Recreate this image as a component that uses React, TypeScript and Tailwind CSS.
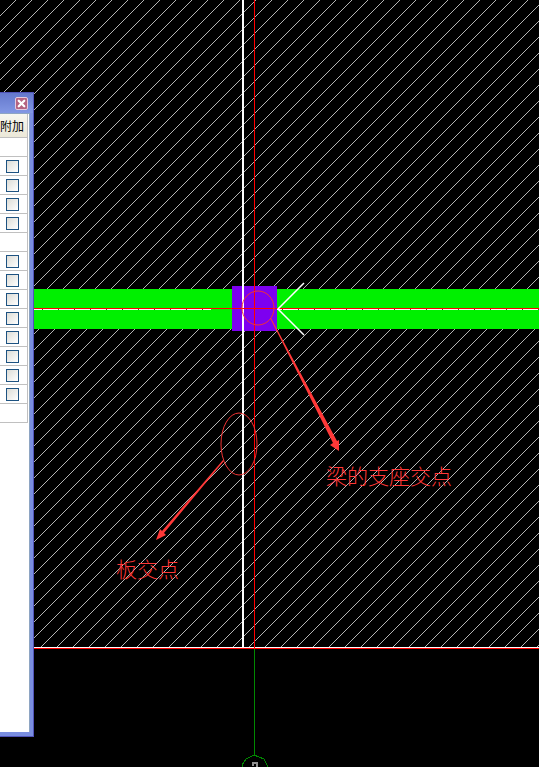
import { X } from "lucide-react";

// One entry per grid row, true where the row has a tick box
const rows = [
  false,
  true, true, true, true,
  false,
  true, true, true, true, true, true, true, true,
  false,
];

// Stepped diagonal of single pixels, repeated every 16px
const hatchPath = Array.from({ length: 16 }, (_, i) => `M${i} ${15 - i}h1v1h-1z`).join("");

function Drawing() {
  return (
    <svg className="absolute inset-0 h-full w-full" aria-hidden="true">
      <defs>
        <pattern id="hatch" width="16" height="16" patternUnits="userSpaceOnUse">
          <path d={hatchPath} fill="#b4b4b4" shapeRendering="crispEdges" />
        </pattern>
        <pattern id="dashes" width="16" height="16" patternUnits="userSpaceOnUse">
          <rect width="16" height="16" fill="#ffffff" />
          <rect x="10" width="1" height="16" fill="#604020" />
        </pattern>
      </defs>

      <g shapeRendering="crispEdges">
        <rect width="100%" height="647" fill="url(#hatch)" />

        {/* Beam and column */}
        <rect y="289" width="100%" height="40" fill="#00f000" />
        <rect y="309" width="100%" height="1" fill="url(#dashes)" />
        <rect x="211" y="309" width="21" height="1" fill="#00f000" />
        <rect x="232" y="286" width="45" height="45" fill="#7d00f0" />

        {/* Slab edges */}
        <rect x="242" width="2" height="647" fill="#ffffff" />
        <rect y="647" width="100%" height="1" fill="#ffffff" />

        {/* Axes */}
        <rect y="308" width="100%" height="1" fill="#ff0000" />
        <rect y="648" width="100%" height="1" fill="#ff0000" />
        <rect x="254" width="1" height="648" fill="#ff0000" />
        <rect x="254" y="649" width="1" height="107" fill="#008800" />
        <path
          d="M242 768V765L246 759L250 757L254 755L259 757L264 759L267 765V768"
          fill="none"
          stroke="#008800"
        />
      </g>

      <path d="M304 283L278 309L304 335" fill="none" stroke="#ffffff" strokeWidth="1.5" />

      {/* Axis number, cut off by the lower edge */}
      <path d="M253 766V763H257V768" fill="none" stroke="#909090" strokeWidth="2" />

      {/* Red markup */}
      <g fill="none" stroke="#f03434">
        <ellipse cx="258" cy="308" rx="16" ry="17" />
        <ellipse cx="239" cy="444" rx="18" ry="31" />
      </g>
      <g fill="#ff3838">
        <path d="M270 318L271 318L337 441L339 440L339 451L330 445L333 443Z" />
        <path d="M223 460L224 461L164 533L166 535L156 540L160 529L162 531Z" />
      </g>
    </svg>
  );
}

function OptionsWindow() {
  return (
    <section
      aria-label="附加"
      className="absolute top-[92px] bottom-[30px] left-0 flex w-[34px] flex-col border-t border-r border-b border-[#5053b8] bg-[#7a8ee0]"
    >
      <div className="flex h-5 shrink-0 items-center justify-end bg-linear-to-b from-[#6478cc] to-[#8297e4] pr-[5px]">
        <button
          type="button"
          aria-label="关闭"
          className="flex h-[13px] w-[13px] items-center justify-center rounded-xs border border-[#e4cbe0] bg-[#b56482] text-white"
        >
          <X size={11} strokeWidth={5} className="shrink-0" />
        </button>
      </div>

      <div className="mr-[3px] mb-1 flex-1 border-t border-r border-[#8ea5c3] bg-white pr-px">
        <table className="w-full table-fixed border-separate border-spacing-0">
          <thead>
            <tr>
              <th className="h-6 overflow-hidden border-r border-b border-[#c0c0c0] bg-linear-to-b from-[#f8f7f0] to-[#ebe8d8] p-0 text-left text-xs leading-4 font-normal whitespace-nowrap text-black">
                附加
              </th>
            </tr>
          </thead>
          <tbody>
            {rows.map((hasBox, i) => (
              <tr key={i}>
                <td className="h-[19px] border-r border-b border-[#c0c0c0] p-0">
                  {hasBox && (
                    <input
                      type="checkbox"
                      aria-label={`附加 ${i + 1}`}
                      className="ml-1.5 block h-[13px] w-[13px] appearance-none border border-[#1d5281] bg-linear-to-br from-[#dcdcd6] to-white"
                    />
                  )}
                </td>
              </tr>
            ))}
          </tbody>
        </table>
      </div>
    </section>
  );
}

export default function App() {
  return (
    <main className="relative h-screen overflow-hidden bg-black font-['Noto_Sans_CJK_SC',sans-serif]">
      <Drawing />
      <p className="absolute top-[463px] left-[326px] text-[21px] leading-6 font-light whitespace-nowrap text-[#ff3838]">
        梁的支座交点
      </p>
      <p className="absolute top-[556px] left-[116px] text-[21px] leading-6 font-light whitespace-nowrap text-[#ff3838]">
        板交点
      </p>
      <OptionsWindow />
    </main>
  );
}
